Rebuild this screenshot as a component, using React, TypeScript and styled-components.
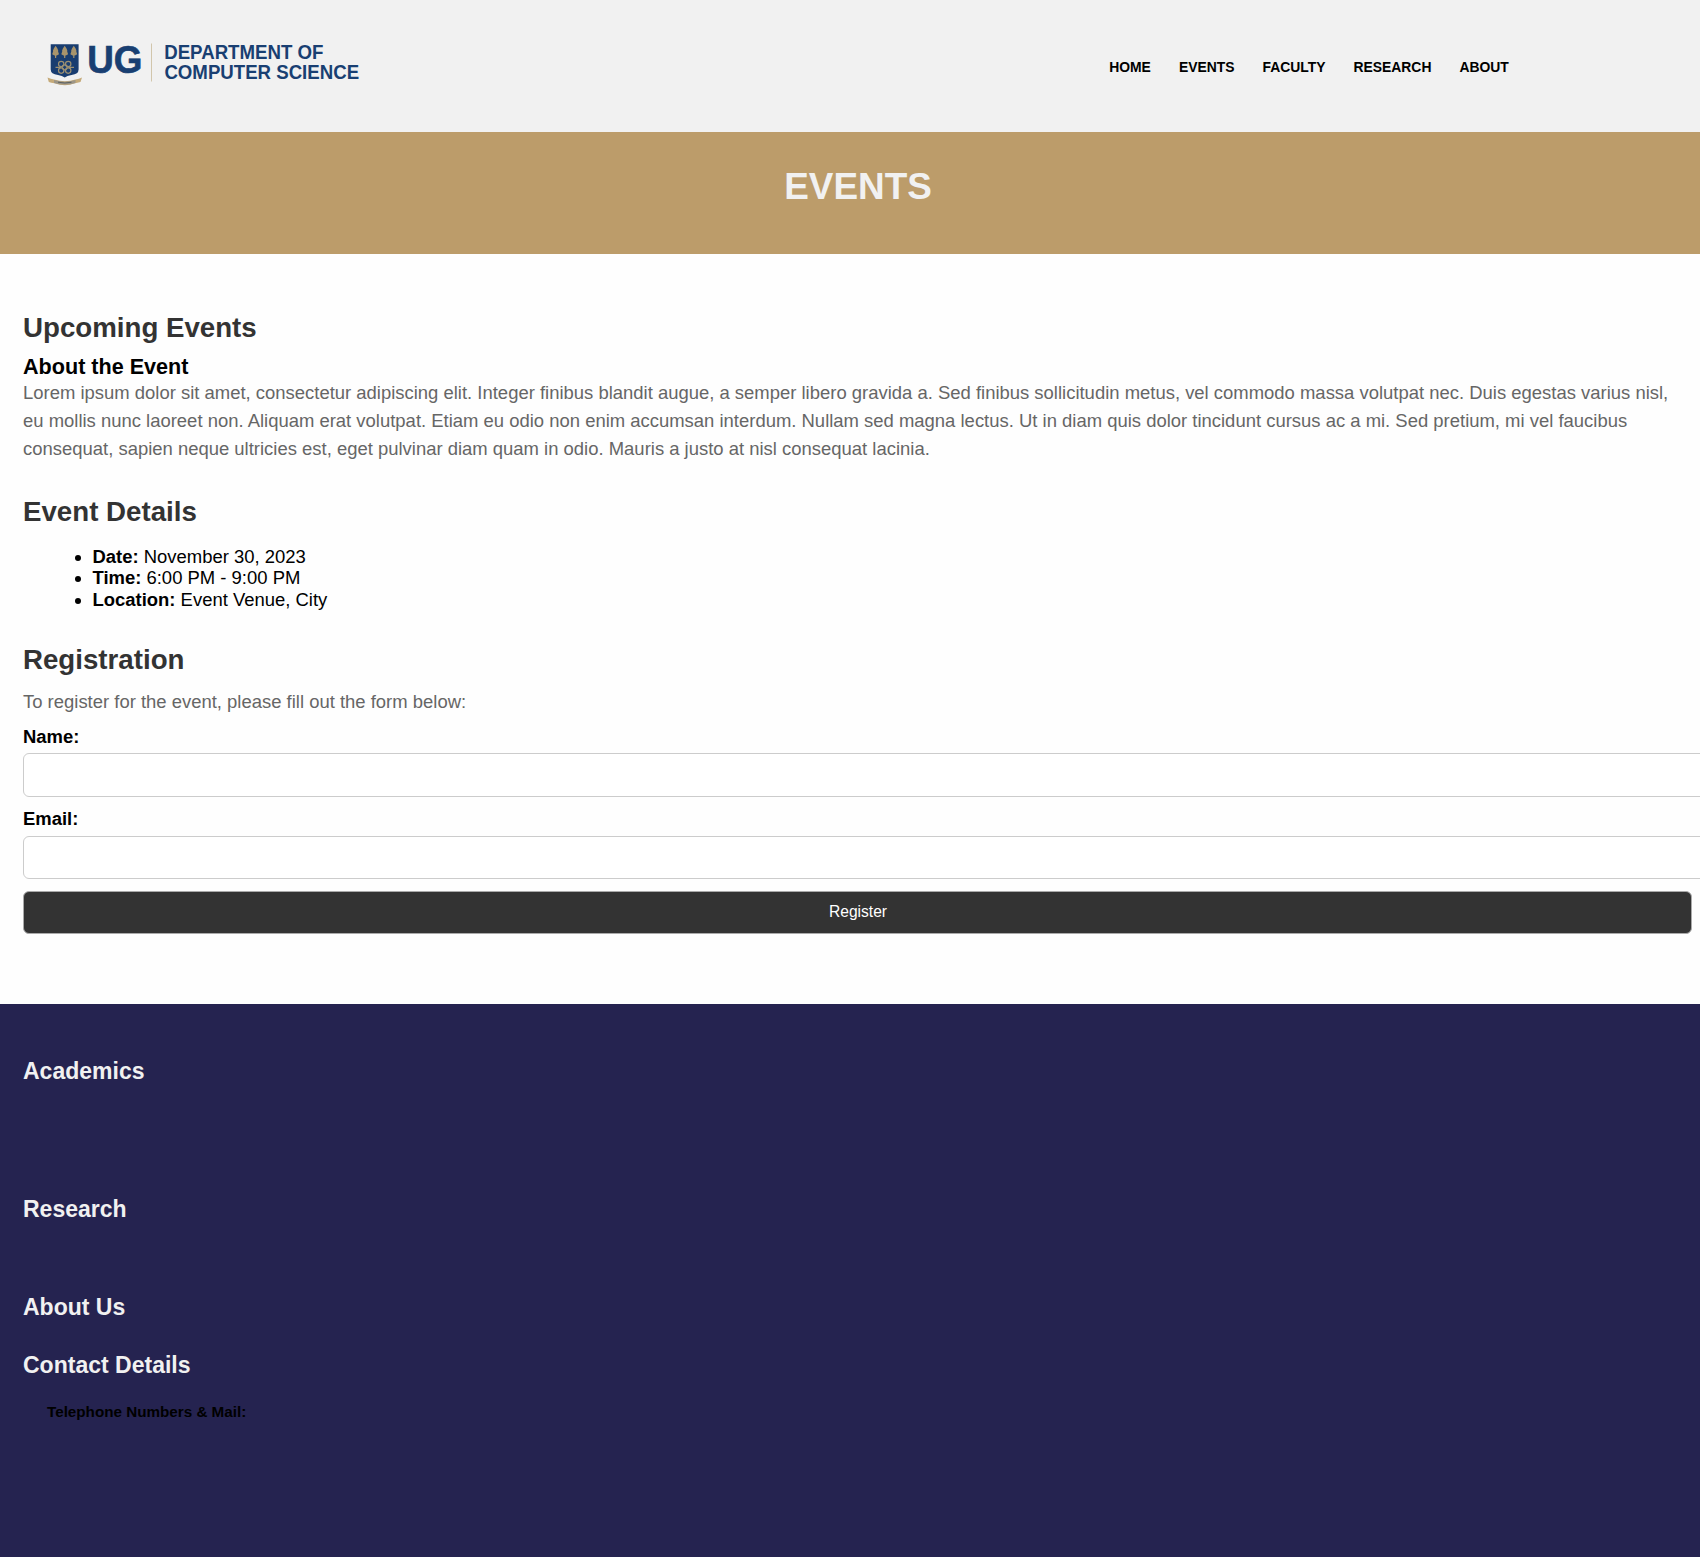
import React from "react";
import styled, { createGlobalStyle } from "styled-components";

const GlobalStyle = createGlobalStyle`
  *, *::before, *::after { box-sizing: border-box; }
  html { overflow: hidden; }
  body {
    margin: 0;
    background: #fefefe;
    color: #000;
    font-family: "Liberation Sans", Arial, Helvetica, sans-serif;
  }
`;

const Page = styled.div`
  display: flex;
  flex-direction: column;
  width: 100%;
  height: 1557px;
  overflow: hidden;
`;

const Header = styled.header`
  display: flex;
  align-items: center;
  justify-content: space-between;
  flex: none;
  height: 132px;
  padding: 0 191.2px 0 46px;
  background: #f1f1f1;
`;

const LogoArt = styled.svg`
  display: block;
  width: 330px;
  height: 92px;
  overflow: visible;
  font-family: "Liberation Sans", Arial, Helvetica, sans-serif;
  font-weight: 700;
`;

const Nav = styled.nav`
  display: flex;
  gap: 28px;
  padding-top: 2px;
`;

const NavLink = styled.a`
  color: #000;
  font-size: 13.9px;
  font-weight: 700;
  line-height: 16px;
  text-decoration: none;
`;

const Banner = styled.section`
  flex: none;
  height: 121.5px;
  padding: 33.3px 0 0 16px;
  background: #bc9c6a;
  text-align: center;
`;

const BannerTitle = styled.h1`
  margin: 0;
  color: #f1f1f1;
  font-size: 36.9px;
  line-height: 44px;
`;

const Main = styled.main`
  flex: none;
  height: 750px;
  padding: 58px 8px 0 23px;
`;

const Block = styled.section`
  margin-bottom: 34px;
`;

const Heading = styled.h2<{ $gap: number }>`
  margin: 0 0 ${(p) => p.$gap}px;
  color: #333;
  font-size: 27.68px;
  line-height: 32px;
`;

const SubHeading = styled.h3`
  margin: 0 0 0.6px;
  font-size: 21.58px;
  line-height: 25px;
`;

const Paragraph = styled.p`
  margin: 0;
  color: #666;
  font-size: 18.47px;
  line-height: 27.79px;
`;

const Details = styled.ul`
  margin: 0;
  padding-left: 69.5px;
  font-size: 18.46px;
  line-height: 21.4px;
`;

const Form = styled.form`
  display: flex;
  flex-direction: column;
  margin-top: 10.7px;
`;

const Label = styled.label`
  margin-bottom: 6px;
  font-size: 18.46px;
  font-weight: 700;
  line-height: 21.3px;
`;

const Field = styled.input`
  width: calc(100% + 26px);
  height: 43.5px;
  margin-bottom: 11.5px;
  padding: 0 12px;
  border: 1px solid #ccc;
  border-radius: 6px;
  background: #fff;
  font: inherit;
`;

const Submit = styled.button`
  height: 43px;
  border: 1px solid #aaa;
  border-radius: 6px;
  background: #333;
  color: #fff;
  font-family: inherit;
  font-size: 15.6px;
  padding: 0 0 1px 1px;
`;

const Footer = styled.footer`
  flex: 1;
  padding: 54px 23px 0;
  background: #252350;
`;

const FooterBlock = styled.section<{ $height: number }>`
  height: ${(p) => p.$height}px;
`;

const FooterTitle = styled.h3`
  margin: 0;
  color: #f1f1f1;
  font-size: 23.02px;
  line-height: 27px;
`;

const ContactNote = styled.h5`
  margin: 24.5px 0 0 24px;
  font-size: 15.22px;
  line-height: 18px;
`;

const navItems = ["HOME", "EVENTS", "FACULTY", "RESEARCH", "ABOUT"];

const details = [
  { label: "Date:", value: "November 30, 2023" },
  { label: "Time:", value: "6:00 PM - 9:00 PM" },
  { label: "Location:", value: "Event Venue, City" },
];

const footerBlocks = [
  { title: "Academics", height: 138.9 },
  { title: "Research", height: 97.3 },
  { title: "About Us", height: 58.2 },
];

function Logo() {
  return (
    <LogoArt viewBox="46 20 330 92" role="img" aria-label="UG Department of Computer Science">
      <path d="M50.7 44.2H78.6V69.5Q78.6 74 71.5 75Q67 75.6 64.7 77.5Q62.3 75.6 58 75Q50.7 74 50.7 69.5Z" fill="#193d70" />
      {[55.6, 64.7, 73.8].map((x) => (
        <g key={x} fill="#a8946c">
          <path d={`M${x} 45.8L${x + 1.8} 48.5L${x + 2.6} 50.5L${x + 2.5} 51.5L${x + 3.4} 54.2L${x + 1.2} 55.4H${x - 1.2}L${x - 3.4} 54.2L${x - 2.5} 51.5L${x - 2.6} 50.5L${x - 1.8} 48.5Z`} />
          <path d={`M${x - 0.6} 55h1.2v3h-1.2z`} />
        </g>
      ))}
      <g fill="none" stroke="#9c9072" strokeWidth="1.2">
        <circle cx="61.2" cy="64" r="2.7" />
        <circle cx="68.2" cy="64" r="2.7" />
        <circle cx="61.2" cy="70.6" r="2.7" />
        <circle cx="68.2" cy="70.6" r="2.7" />
        <circle cx="64.7" cy="67.3" r="2.5" />
        <path d="M55.5 67.3H61M68.4 67.3H74" />
      </g>
      <path d="M47.5 77.5Q51 79 54 79.5Q65 83 75.5 79.5Q79 79 82 77.5L80.5 82Q77 83 75 83.3Q65 87 54.5 83.3Q51 83 48.8 82Z" fill="#c5aa79" />
      <path d="M54 80Q65 83.3 75.5 80V83Q65 86.2 54 83Z" fill="#9c9587" />
      <path d="M58 82.2Q65 83.8 71.5 82.2" fill="none" stroke="#555b5c" strokeWidth="0.9" />
      <g fill="#193f72">
        <text x="87.2" y="73" fontSize="39" stroke="#193f72" strokeWidth="0.7" textLength="55.2" lengthAdjust="spacingAndGlyphs">UG</text>
        <text x="164.2" y="59" fontSize="19.8" textLength="159.3" lengthAdjust="spacingAndGlyphs">DEPARTMENT OF</text>
        <text x="164.4" y="79.3" fontSize="19.8" textLength="194.7" lengthAdjust="spacingAndGlyphs">COMPUTER SCIENCE</text>
      </g>
      <path d="M151.5 43.5V81.5" stroke="#d2c6ac" strokeWidth="1" />
    </LogoArt>
  );
}

export default function App() {
  return (
    <Page>
      <GlobalStyle />
      <Header>
        <Logo />
        <Nav>
          {navItems.map((item) => (
            <NavLink key={item} href="#">{item}</NavLink>
          ))}
        </Nav>
      </Header>
      <Banner>
        <BannerTitle>EVENTS</BannerTitle>
      </Banner>
      <Main>
        <Block>
          <Heading $gap={10}>Upcoming Events</Heading>
          <SubHeading>About the Event</SubHeading>
          <Paragraph>
            Lorem ipsum dolor sit amet, consectetur adipiscing elit. Integer finibus blandit augue, a semper libero gravida a. Sed finibus sollicitudin metus, vel commodo massa volutpat nec. Duis egestas varius nisl, eu mollis nunc laoreet non. Aliquam erat volutpat. Etiam eu odio non enim accumsan interdum. Nullam sed magna lectus. Ut in diam quis dolor tincidunt cursus ac a mi. Sed pretium, mi vel faucibus consequat, sapien neque ultricies est, eget pulvinar diam quam in odio. Mauris a justo at nisl consequat lacinia.
          </Paragraph>
        </Block>
        <Block>
          <Heading $gap={17.6}>Event Details</Heading>
          <Details>
            {details.map((d) => (
              <li key={d.label}>
                <strong>{d.label}</strong> {d.value}
              </li>
            ))}
          </Details>
        </Block>
        <Block>
          <Heading $gap={11.3}>Registration</Heading>
          <Paragraph>To register for the event, please fill out the form below:</Paragraph>
          <Form onSubmit={(e) => e.preventDefault()}>
            <Label htmlFor="name">Name:</Label>
            <Field id="name" type="text" />
            <Label htmlFor="email">Email:</Label>
            <Field id="email" type="email" />
            <Submit type="submit">Register</Submit>
          </Form>
        </Block>
      </Main>
      <Footer>
        {footerBlocks.map((b) => (
          <FooterBlock key={b.title} $height={b.height}>
            <FooterTitle>{b.title}</FooterTitle>
          </FooterBlock>
        ))}
        <FooterTitle>Contact Details</FooterTitle>
        <ContactNote>Telephone Numbers &amp; Mail:</ContactNote>
      </Footer>
    </Page>
  );
}
